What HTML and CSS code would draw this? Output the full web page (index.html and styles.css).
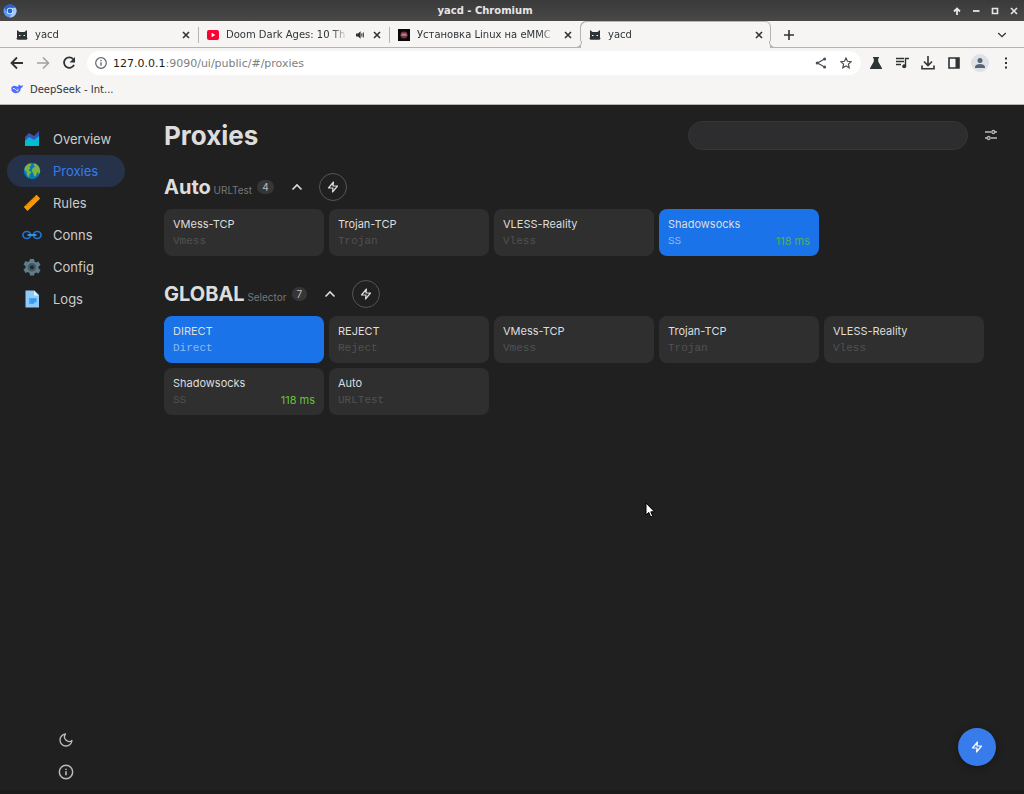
FILE: index.html
```html
<!DOCTYPE html>
<html lang="en">
<head>
  <meta charset="UTF-8">
  <meta name="viewport" content="width=device-width, initial-scale=1.0">
  <title>yacd - Chromium</title>
  <link rel="stylesheet" href="styles.css">
</head>
<body>
  <svg class="sprites" aria-hidden="true">
    <symbol id="cat" viewBox="0 0 12 12">
      <path d="M1 1l2.600 2h4.800l2.600-2v7.500l.6 1.200-1.200 1H1.600l-1.200-1L1 8.500z" fill="#2e3436"/>
      <path d="M3 6h1.500v1H3zM7.500 6H9v1H7.500z" fill="#f6f5f4"/>
    </symbol>
    <symbol id="close" viewBox="0 0 8 8">
      <path d="M1 1l6 6M7 1L1 7" fill="none" stroke="currentColor" stroke-width="1.600"/>
    </symbol>
    <symbol id="bolt" viewBox="0 0 24 24">
      <path d="M13 2L3 14h9l-1 8 10-12h-9l1-8z" fill="none" stroke="currentColor" stroke-width="2.400" stroke-linecap="round" stroke-linejoin="round"/>
    </symbol>
    <symbol id="chevron" viewBox="0 0 12 8">
      <path d="M1.500 6.500L6 2l4.500 4.500" fill="none" stroke="currentColor" stroke-width="1.600"/>
    </symbol>
  </svg>

  <header class="titlebar">
    <svg class="app-icon" viewBox="0 0 14 14">
      <circle cx="7" cy="7" r="6.500" fill="#5e97f6"/>
      <path d="M7 .5A6.500 6.500 0 0 1 12.600 3.800H7A3.200 3.200 0 0 0 4 8L1.400 3.700A6.500 6.500 0 0 1 7 .5z" fill="#2a62c8"/>
      <path d="M12.600 3.800A6.500 6.500 0 0 1 6.500 13.500L9.700 8.700A3.300 3.300 0 0 0 9 4z" fill="#a6c8fb"/>
      <circle cx="7" cy="7" r="3.200" fill="#e6effe"/>
      <circle cx="7" cy="7" r="2.400" fill="#1a66d8"/>
    </svg>
    <span class="window-title">yacd - Chromium</span>
    <div class="window-buttons">
      <button aria-label="Shade"><svg viewBox="0 0 8 8"><path d="M4 8V2M1 4.500l3-3 3 3" fill="none" stroke="currentColor" stroke-width="1.800"/></svg></button>
      <button aria-label="Minimize"><svg viewBox="0 0 8 8"><path d="M1 4h6.500" stroke="currentColor" stroke-width="1.800"/></svg></button>
      <button aria-label="Maximize"><svg viewBox="0 0 8 8"><path d="M1.500 1.500h5v5h-5z" fill="none" stroke="currentColor" stroke-width="1.600"/></svg></button>
      <button aria-label="Close window"><svg viewBox="0 0 8 8"><use href="#close"/></svg></button>
    </div>
  </header>

  <div class="tabs">
    <div class="tab">
      <svg class="favicon"><use href="#cat"/></svg>
      <span class="tab-title">yacd</span>
      <button aria-label="Close tab"><svg><use href="#close"/></svg></button>
    </div>
    <div class="tab">
      <svg class="favicon" viewBox="0 0 12 12"><rect y="1" width="12" height="10" rx="2" fill="#f03"/><path d="M4.600 3.800v4.400L8.300 6z" fill="#fff"/></svg>
      <span class="tab-title">Doom Dark Ages: 10 Th</span>
      <svg class="speaker" viewBox="0 0 8 8"><path d="M0 2.600h2L4.600.3v7.400L2 5.400H0z" fill="#2e3436"/><path d="M5.800 2.400v3.200M7.300 1.500v5" stroke="#2e3436"/></svg>
      <button aria-label="Close tab"><svg><use href="#close"/></svg></button>
    </div>
    <div class="tab">
      <svg class="favicon" viewBox="0 0 12 12"><path d="M0 0h12v12H0z" fill="#080808"/><circle cx="6" cy="6" r="3.500" fill="#7d2f3c"/><path d="M2 6.500h8M3 3.500l6 5M9 3.500l-6 5" stroke="#4b3468"/><path d="M3.500 4h5v1.400h-5z" fill="#c8452e"/><path d="M3.500 5.400h5v1.200h-5z" fill="#dcb09b"/></svg>
      <span class="tab-title">Установка Linux на eMMC</span>
      <button aria-label="Close tab"><svg><use href="#close"/></svg></button>
    </div>
    <div class="tab active">
      <svg class="favicon"><use href="#cat"/></svg>
      <span class="tab-title">yacd</span>
      <button aria-label="Close tab"><svg><use href="#close"/></svg></button>
    </div>
    <div class="tab-tools">
      <button aria-label="New tab"><svg viewBox="0 0 10 10"><path d="M5 0v10M0 5h10" stroke="currentColor" stroke-width="1.600"/></svg></button>
      <button aria-label="Search tabs"><svg class="flip" viewBox="0 0 12 8"><use href="#chevron"/></svg></button>
    </div>
  </div>

  <div class="toolbar">
    <button aria-label="Back"><svg viewBox="0 0 16 16"><path d="M14 8H3M8 2.500L2.500 8 8 13.500" fill="none" stroke="currentColor" stroke-width="1.800"/></svg></button>
    <button aria-label="Forward" disabled><svg viewBox="0 0 16 16"><path d="M2 8h11M8 2.500L13.500 8 8 13.500" fill="none" stroke="currentColor" stroke-width="1.600"/></svg></button>
    <button aria-label="Reload"><svg viewBox="0 0 16 16"><path d="M12.200 4.200A5.200 5.200 0 1 0 13 9.800" fill="none" stroke="currentColor" stroke-width="1.800"/><path d="M14 2v5.500H8.500z" fill="currentColor"/></svg></button>
    <div class="address">
      <svg viewBox="0 0 12 12"><circle cx="6" cy="6" r="5.300" fill="none" stroke="#5f6368" stroke-width="1.200"/><path d="M6 5.200v3.600M6 3v1.300" stroke="#5f6368" stroke-width="1.300"/></svg>
      <a class="url" href="#/proxies"><span>127.0.0.1</span>:9090/ui/public/#/proxies</a>
      <button aria-label="Share"><svg viewBox="0 0 12 12"><path d="M9.500 2L2.500 6l7 4" fill="none" stroke="currentColor" stroke-width="1.200"/><circle cx="9.600" cy="2" r="1.500" fill="currentColor"/><circle cx="2.200" cy="6" r="1.500" fill="currentColor"/><circle cx="9.600" cy="10" r="1.500" fill="currentColor"/></svg></button>
      <button aria-label="Bookmark this tab"><svg viewBox="0 0 12 12"><path d="M6 1l1.500 3.300 3.600.4-2.700 2.400.8 3.600L6 8.900l-3.200 1.800.8-3.600L.9 4.700l3.600-.4z" fill="none" stroke="currentColor" stroke-width="1.200"/></svg></button>
    </div>
    <div class="toolbar-buttons">
      <button aria-label="Experiments"><svg viewBox="0 0 14 14"><path d="M4 1h6v1.300H9.200V5.500L13 12.200V13H1v-.8L4.800 5.500V2.300H4z" fill="currentColor"/></svg></button>
      <button aria-label="Media"><svg viewBox="0 0 14 14"><path d="M1 2.500h8M1 5.500h8M1 8.500h5M10.500 10V2.500H14" fill="none" stroke="currentColor" stroke-width="1.400"/><circle cx="9.200" cy="10.300" r="2" fill="currentColor"/></svg></button>
      <button aria-label="Downloads"><svg viewBox="0 0 14 14"><path d="M7 0v9M3 5.500L7 9.500l4-4M1 9.500v3.300h12V9.500" fill="none" stroke="currentColor" stroke-width="1.600"/></svg></button>
      <button aria-label="Side panel"><svg viewBox="0 0 14 14"><path d="M2 2h10v10H2z" fill="none" stroke="currentColor" stroke-width="1.600"/><path d="M8.500 2H12v10H8.500z" fill="currentColor"/></svg></button>
      <button class="profile" aria-label="Profile"><svg viewBox="0 0 14 14"><circle cx="7" cy="4.500" r="2.500" fill="currentColor"/><path d="M2 12V11c0-4 10-4 10 0v1z" fill="currentColor"/></svg></button>
      <button aria-label="Menu"><svg viewBox="0 0 14 14"><path d="M6 1.500h2v2H6zM6 6h2v2H6zM6 10.500h2v2H6z" fill="currentColor"/></svg></button>
    </div>
  </div>

  <nav class="bookmarks">
    <a href="#deepseek">
      <svg viewBox="0 0 12 10"><path d="M.3 4.500C.5 2 3 1 5.200 2.200 7 3.200 7.800 2.600 7.600.6c1 .2 1.300 1 2.300 1.100.8.100 1.200-.5 1.900-.8.200 1.700-.6 2.800-2 3.200C9.800 7.500 7.500 9.500 4.600 9.300 2 9.100.2 7.300.3 4.500z" fill="#4d6bfe"/><path d="M2 4.500c2-.8 3 3 5.200 2.500M6.200 4.800l1.300.9" fill="none" stroke="#f6f5f4"/></svg>
      DeepSeek - Int...
    </a>
  </nav>

  <div class="app">
    <aside class="sidebar">
      <nav>
        <a href="#/">
          <svg viewBox="0 0 20 20"><path d="M3 8l4-4 5 3 5-5v15H3z" fill="#3f51b5"/><path d="M3 12l4-4 5 3 5-4v10H3z" fill="#00bcd4"/></svg>
          Overview
        </a>
        <a href="#/proxies" class="active">
          <svg viewBox="0 0 20 20"><circle cx="10" cy="10" r="8.300" fill="#0277bd"/><path d="M3 6l3-3 3.500-.5-.5 2L7.500 6l1 1.500L6.500 9l1.500 1 1.500 1.500-2 2-.5 3.200L5 14l-.5-3L2.500 9zM11 3l3-.2 3 3 1.200 4-1 3.200-2.200-2-.5 3-2 1.800-1.500-4-1.500-2L11 6.500l2-.5z" fill="#7cb342"/></svg>
          Proxies
        </a>
        <a href="#/rules">
          <svg viewBox="0 0 20 20"><path d="M1.800 14L14.500 1.800l3.700 3.700L5.500 18z" fill="#ff9800"/><path d="M4.500 12l1.200 1.200M6.500 10l.8.8M8.500 8l1.200 1.200M10.500 6l.8.8M12.500 4l1.200 1.200" stroke="#a65c00" stroke-width=".8"/></svg>
          Rules
        </a>
        <a href="#/connections">
          <svg viewBox="0 0 20 20"><rect x="1" y="6.500" width="7.500" height="7" rx="3.500" fill="none" stroke="#1976d2" stroke-width="1.700"/><rect x="11.500" y="6.500" width="7.500" height="7" rx="3.500" fill="none" stroke="#1976d2" stroke-width="1.700"/><path d="M5.500 10h9" stroke="#42a5f5" stroke-width="1.600"/></svg>
          Conns
        </a>
        <a href="#/configs">
          <svg viewBox="0 0 20 20"><path d="M8 2h4l.5 2.500 1.600.9 2.400-.9 2 3.500-2 1.600v1.800l2 1.600-2 3.500-2.400-.9-1.600.9L12 18.500H8l-.5-2.500-1.600-.9-2.400.9-2-3.500 2-1.600V9.100l-2-1.600 2-3.500 2.400.9 1.600-.9z" fill="#607d8b"/><circle cx="10" cy="10.200" r="4.200" fill="#455a64"/><circle cx="10" cy="10.200" r="2" fill="#20282c"/></svg>
          Config
        </a>
        <a href="#/logs">
          <svg viewBox="0 0 20 20"><path d="M3.500 1.500h9l4.500 4.500v12.500H3.500z" fill="#90caf9"/><path d="M12 2l4.500 4.500H12z" fill="#e1f5fe"/><path d="M7 9h7.500v4.500H12V15H7z" fill="#42a5f5"/><path d="M9 11h5.500M9 13h3" stroke="#1e88e5" stroke-width=".7"/></svg>
          Logs
        </a>
      </nav>
      <div class="sidebar-footer">
        <button aria-label="Switch theme"><svg viewBox="0 0 24 24"><path d="M21 12.790A9 9 0 1 1 11.210 3 7 7 0 0 0 21 12.790z" fill="none" stroke="currentColor" stroke-width="2" stroke-linejoin="round"/></svg></button>
        <a href="#/about" aria-label="About"><svg viewBox="0 0 24 24"><circle cx="12" cy="12" r="10" fill="none" stroke="currentColor" stroke-width="2.200"/><path d="M12 11v6M12 7v2" stroke="currentColor" stroke-width="2.400"/></svg></a>
      </div>
    </aside>

    <main>
      <div class="page-header">
        <h1>Proxies</h1>
        <input type="text" class="search" aria-label="Filter proxies">
        <button class="icon-button" aria-label="Settings"><svg viewBox="0 0 14 12"><path d="M1 3h6M11 3h2M1 9h2M7 9h6" stroke="currentColor" stroke-width="1.500"/><circle cx="9.300" cy="3" r="1.500" fill="none" stroke="currentColor" stroke-width="1.300"/><circle cx="4.700" cy="9" r="1.500" fill="none" stroke="currentColor" stroke-width="1.300"/></svg></button>
      </div>

      <section class="group">
        <div class="group-header">
          <h2>Auto <small>URLTest</small></h2>
          <span class="count">4</span>
          <button class="toggle" aria-label="Collapse Auto"><svg><use href="#chevron"/></svg></button>
          <button class="test" aria-label="Test latency"><svg><use href="#bolt"/></svg></button>
        </div>
        <div class="proxies">
          <div class="proxy"><div class="name">VMess-TCP</div><div class="row"><span class="type">Vmess</span></div></div>
          <div class="proxy"><div class="name">Trojan-TCP</div><div class="row"><span class="type">Trojan</span></div></div>
          <div class="proxy"><div class="name">VLESS-Reality</div><div class="row"><span class="type">Vless</span></div></div>
          <div class="proxy now"><div class="name">Shadowsocks</div><div class="row"><span class="type">SS</span><span class="latency">118 ms</span></div></div>
        </div>
      </section>

      <section class="group">
        <div class="group-header">
          <h2>GLOBAL <small>Selector</small></h2>
          <span class="count">7</span>
          <button class="toggle" aria-label="Collapse GLOBAL"><svg><use href="#chevron"/></svg></button>
          <button class="test" aria-label="Test latency"><svg><use href="#bolt"/></svg></button>
        </div>
        <div class="proxies">
          <div class="proxy now"><div class="name">DIRECT</div><div class="row"><span class="type">Direct</span></div></div>
          <div class="proxy"><div class="name">REJECT</div><div class="row"><span class="type">Reject</span></div></div>
          <div class="proxy"><div class="name">VMess-TCP</div><div class="row"><span class="type">Vmess</span></div></div>
          <div class="proxy"><div class="name">Trojan-TCP</div><div class="row"><span class="type">Trojan</span></div></div>
          <div class="proxy"><div class="name">VLESS-Reality</div><div class="row"><span class="type">Vless</span></div></div>
          <div class="proxy"><div class="name">Shadowsocks</div><div class="row"><span class="type">SS</span><span class="latency">118 ms</span></div></div>
          <div class="proxy"><div class="name">Auto</div><div class="row"><span class="type">URLTest</span></div></div>
        </div>
      </section>
    </main>

    <button class="fab" aria-label="Test all latencies"><svg><use href="#bolt"/></svg></button>
    <svg class="pointer" viewBox="0 0 10 16"><path d="M1 1v12l2.800-2.600L5.700 15l2-.9-1.900-4.300h3.700z" fill="#fff" stroke="#000"/></svg>
  </div>
</body>
</html>
```
FILE: styles.css
```css
* {
  box-sizing: border-box;
}
body {
  margin: 0;
  min-height: 100vh;
  display: flex;
  flex-direction: column;
  background: #202020;
  color: #2e3436;
  font-family: "DejaVu Sans", sans-serif;
  font-size: 10px;
}
button {
  display: flex;
  align-items: center;
  justify-content: center;
  padding: 0;
  border: 0;
  background: none;
  color: inherit;
}
a {
  color: inherit;
  text-decoration: none;
}
svg {
  display: block;
  flex-shrink: 0;
}
.sprites {
  position: absolute;
  width: 0;
  height: 0;
}

/* window frame */
.titlebar {
  display: flex;
  align-items: center;
  height: 21px;
  padding: 0 6px 0 3px;
  background: linear-gradient(#3a3a3a, #484848);
  color: #e6e6e6;
}
.app-icon {
  width: 14px;
  height: 14px;
}
.window-title {
  flex: 1;
  text-align: center;
  font-weight: bold;
}
.window-buttons {
  display: flex;
  gap: 11px;
}
.window-buttons svg {
  width: 8px;
  height: 8px;
}

/* tabs */
.tabs {
  display: flex;
  height: 27px;
  padding-left: 7px;
  background: #f6f5f4;
  box-shadow: inset 0 -1px #b4b4b2;
}
.tab {
  position: relative;
  display: flex;
  align-items: center;
  flex: 0 1 191px;
  min-width: 0;
  padding: 0 8px 0 9px;
}
.tab + .tab:not(.active)::before {
  content: "";
  position: absolute;
  left: 0;
  top: 6px;
  width: 1px;
  height: 16px;
  background: #b4b4b2;
}
.tab.active {
  border-radius: 6px 6px 0 0;
  background: #f6f5f4;
  box-shadow: inset 1px 1px #b4b4b2, inset -1px 0 #b4b4b2;
}
.tab.active::before,
.tab.active::after {
  content: "";
  position: absolute;
  bottom: 0;
  width: 6px;
  height: 6px;
  border-bottom: 1px solid #b4b4b2;
  background: #f6f5f4;
}
.tab.active::before {
  left: -5px;
  border-right: 1px solid #b4b4b2;
  border-bottom-right-radius: 6px;
}
.tab.active::after {
  right: -5px;
  border-left: 1px solid #b4b4b2;
  border-bottom-left-radius: 6px;
}
.favicon {
  width: 12px;
  height: 12px;
  margin-right: 7px;
}
.tab-title {
  flex: 1;
  overflow: hidden;
  margin-right: 8px;
  white-space: nowrap;
  -webkit-mask-image: linear-gradient(to left, transparent, #000 16px);
  mask-image: linear-gradient(to left, transparent, #000 16px);
}
.speaker {
  width: 8px;
  height: 8px;
  margin-right: 9px;
}
.tab button svg {
  width: 8px;
  height: 8px;
}
.tab-tools {
  display: flex;
  flex: 1;
  justify-content: space-between;
  padding: 0 17px 0 13px;
}
.tab-tools svg {
  width: 10px;
  height: 10px;
}
.flip {
  transform: rotate(180deg);
}

/* toolbar */
.toolbar {
  display: flex;
  align-items: center;
  height: 31px;
  padding: 0 9px 1px;
  background: #f6f5f4;
}
.toolbar > button {
  margin-right: 10px;
}
.toolbar > button svg {
  width: 16px;
  height: 16px;
}
.toolbar button:disabled {
  color: #a0a2a2;
}
.address {
  display: flex;
  align-items: center;
  flex: 1;
  height: 24px;
  padding: 0 9px 0 8px;
  border-radius: 12px;
  background: #fff;
}
.address svg {
  width: 12px;
  height: 12px;
}
.address button {
  margin-left: 13px;
  color: #4a4e50;
}
.url {
  flex: 1;
  margin-left: 6px;
  color: #7c7f80;
  font-size: 11px;
}
.url span {
  color: #1c1f20;
}
.toolbar-buttons {
  display: flex;
  align-items: center;
  gap: 8px;
  margin-left: 6px;
}
.toolbar-buttons button {
  width: 18px;
  height: 18px;
}
.toolbar-buttons svg {
  width: 14px;
  height: 14px;
}
.toolbar-buttons .profile {
  border-radius: 50%;
  background: #dee1e6;
  color: #5a6478;
}
.bookmarks {
  height: 26px;
  padding: 0 11px;
  border-bottom: 1px solid #b4b4b2;
  background: #f6f5f4;
}
.bookmarks a {
  display: flex;
  align-items: center;
  gap: 7px;
  height: 20px;
}
.bookmarks svg {
  width: 12px;
  height: 10px;
}

/* yacd */
.app {
  position: relative;
  display: flex;
  flex: 1;
  border-bottom: 4px solid #1a1a1a;
  background: #202020;
  color: #ddd;
  font-family: Inter, sans-serif;
  font-size: 13px;
}
.sidebar {
  display: flex;
  flex-direction: column;
  justify-content: space-between;
  flex: 0 0 132px;
  padding: 18px 7px 10px;
}
.sidebar nav a {
  display: flex;
  align-items: center;
  gap: 11px;
  height: 32px;
  padding-left: 15px;
  border-radius: 16px;
  color: #ccc;
}
.sidebar nav a.active {
  background: #253249;
  color: #387cec;
}
.sidebar nav svg {
  width: 20px;
  height: 20px;
}
.sidebar-footer {
  display: flex;
  flex-direction: column;
  align-items: center;
  gap: 16px;
  color: #bbb;
}
.sidebar-footer svg {
  width: 16px;
  height: 16px;
}
main {
  flex: 1;
  min-width: 0;
  padding: 10px 26px 10px 32px;
}
.page-header {
  display: flex;
  align-items: center;
  height: 40px;
}
h1 {
  flex: 1;
  margin: 0;
  font-size: 26px;
}
.search {
  width: 280px;
  height: 29px;
  padding: 0 15px;
  border: 1px solid #363636;
  border-radius: 15px;
  outline: none;
  background: #2d2d2f;
  color: #ddd;
}
.icon-button {
  margin-left: 16px;
  color: #bbb;
}
.icon-button svg {
  width: 14px;
  height: 12px;
}
.group {
  padding-right: 14px;
}
.group-header {
  display: flex;
  align-items: center;
  height: 28px;
  margin: 18px 0 8px;
}
.group + .group .group-header {
  margin-top: 24px;
}
h2 {
  margin: 0;
  font-size: 20px;
}
h2 small {
  margin-left: -2px;
  color: #777;
  font-size: 10px;
  font-weight: normal;
}
.count {
  margin-left: 5px;
  padding: 0 5px;
  border-radius: 7px;
  background: #363636;
  color: #bbb;
  font-size: 10px;
  line-height: 14px;
}
.toggle {
  width: 12px;
  margin-left: 17px;
}
.toggle svg {
  width: 12px;
  height: 8px;
}
.test {
  width: 28px;
  height: 28px;
  margin-left: 16px;
  border: 1px solid #555;
  border-radius: 50%;
}
.test svg {
  width: 12px;
  height: 12px;
}
.proxies {
  display: grid;
  grid-template-columns: repeat(auto-fill, minmax(158px, 1fr));
  gap: 5px;
}
.proxy {
  height: 47px;
  padding: 7px 9px;
  border-radius: 8px;
  background: #2f2f2f;
}
.name {
  overflow: hidden;
  font-size: 11px;
  line-height: 16px;
  text-overflow: ellipsis;
  white-space: nowrap;
}
.row {
  display: flex;
  align-items: center;
  justify-content: space-between;
  height: 18px;
}
.type {
  color: #515151;
  font-family: "Liberation Mono", monospace;
  font-size: 11px;
}
.latency {
  color: #67c23a;
  font-size: 11px;
}
.proxy.now {
  background: #1a73e8;
}
.proxy.now .type {
  color: #8db9f3;
}
.proxy.now .latency {
  color: #4fae62;
}
.fab {
  position: fixed;
  right: 28px;
  bottom: 28px;
  width: 38px;
  height: 38px;
  border-radius: 50%;
  background: #387cec;
  color: #fff;
  box-shadow: 0 2px 8px rgba(0, 0, 0, 0.3);
}
.fab svg {
  width: 12px;
  height: 12px;
}
.pointer {
  position: absolute;
  left: 645px;
  top: 397px;
  width: 10px;
  height: 16px;
}
```
